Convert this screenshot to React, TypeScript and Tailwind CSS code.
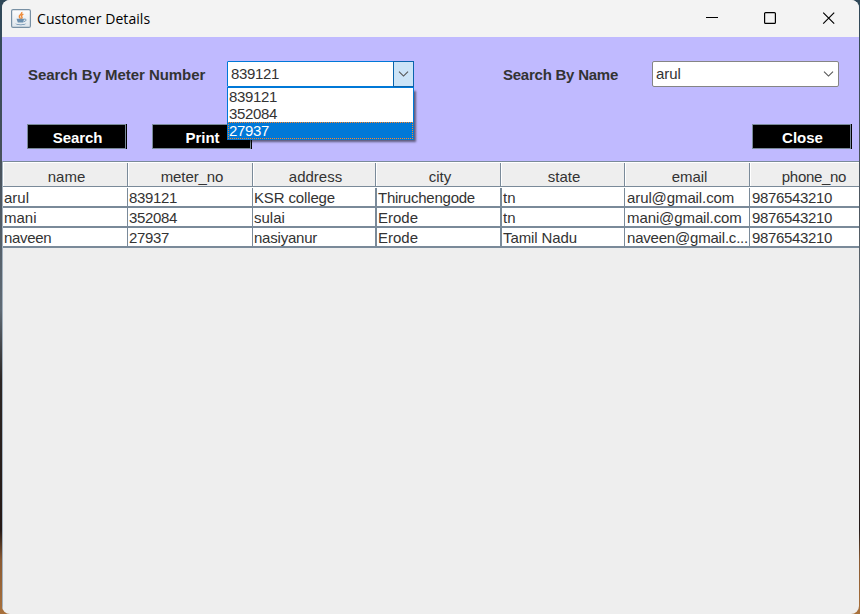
import React from 'react';

type Cell = { text: string; track: string };
type Column = { name: string; head: string; label: string; cell: string; rows: Cell[] };

const digits = 'tracking-[-0.34px]';

const columns: Column[] = [
  { name: 'name', head: 'w-[125px]', label: 'pl-[2px]', cell: 'w-[125px] border-r pl-px', rows: [{ text: 'arul', track: '' }, { text: 'mani', track: '' }, { text: 'naveen', track: 'tracking-[-0.3px]' }] },
  { name: 'meter_no', head: 'w-[125px]', label: 'pl-[3px] tracking-[-0.1px]', cell: 'w-[125px] border-r pl-px', rows: [{ text: '839121', track: digits }, { text: '352084', track: digits }, { text: '27937', track: digits }] },
  { name: 'address', head: 'w-[123px]', label: 'pl-[2px]', cell: 'w-[124px] border-r-2 pl-px', rows: [{ text: 'KSR college', track: 'tracking-[-0.14px]' }, { text: 'sulai', track: '' }, { text: 'nasiyanur', track: 'tracking-[-0.22px]' }] },
  { name: 'city', head: 'w-[125px]', label: 'pl-[3px]', cell: 'w-[125px] border-r-2 pl-px', rows: [{ text: 'Thiruchengode', track: 'tracking-[-0.24px]' }, { text: 'Erode', track: '' }, { text: 'Erode', track: '' }] },
  { name: 'state', head: 'w-[124px]', label: 'pl-[2px]', cell: 'w-[123px] border-r pl-px', rows: [{ text: 'tn', track: '' }, { text: 'tn', track: '' }, { text: 'Tamil Nadu', track: 'tracking-[-0.1px]' }] },
  { name: 'email', head: 'w-[125px]', label: 'pl-[4px] tracking-[-0.1px]', cell: 'w-[125px] border-r pl-[2px]', rows: [{ text: 'arul@gmail.com', track: 'tracking-[-0.1px]' }, { text: 'mani@gmail.com', track: 'tracking-[-0.1px]' }, { text: 'naveen@gmail.c...', track: 'tracking-[-0.2px]' }] },
  { name: 'phone_no', head: 'w-[125px]', label: 'pl-[3px] tracking-[-0.3px]', cell: 'w-[125px] pl-[2px]', rows: [{ text: '9876543210', track: digits }, { text: '9876543210', track: digits }, { text: '9876543210', track: digits }] },
];

function JavaIcon() {
  return (
    <svg className="block h-5 w-5" viewBox="0 0 20 20">
      <defs>
        <linearGradient id="plate" x1="0" y1="0" x2="0" y2="1">
          <stop offset="0" stopColor="#fdfdfd" />
          <stop offset="1" stopColor="#dfe6ec" />
        </linearGradient>
      </defs>
      <rect x="0.6" y="0.6" width="18.8" height="17.8" rx="1.5" fill="url(#plate)" stroke="#7890a4" strokeWidth="1.2" />
      <path d="M10.8 3c.8 2-3 2.9-2.5 4.9.2.8 1 1.2 1.3 1.9M12.4 5.2c-2 .9-2.5 1.8-1.5 2.8.5.6 0 1.2-.6 1.6" fill="none" stroke="#ee8b3a" strokeWidth="1.4" />
      <path d="M5.5 9.8h7.6l-.8 3.6H6.8zM4 14.3c2 1.5 9.5 1.5 11.4 0-1 2.6-10.2 2.6-11.4 0" fill="#6b8fae" />
      <path d="M13 10.2c2.8-.5 2.8 1.8-.2 2.4" fill="none" stroke="#6b8fae" />
    </svg>
  );
}

function Chevron() {
  return (
    <svg className="block h-[6px] w-[11px]" viewBox="0 0 11 6">
      <path d="M1 .7l4.5 4.4L10 .7" fill="none" stroke="#555" strokeWidth="1.1" />
    </svg>
  );
}

function Button({ label, track }: { label: string; track: string }) {
  return (
    <button className="block h-[25px] w-[100px] border-r border-black bg-black">
      <span className={`flex h-[25px] items-center justify-center border border-[#7a8a99] pt-px pl-[2px] text-[15px] leading-[17px] font-bold text-white ${track}`}>{label}</span>
    </button>
  );
}

export default function App() {
  return (
    <div className="h-[614px] w-[860px] overflow-hidden bg-[linear-gradient(180deg,#2f4858_0,#46505a_150px,#5f6a74_310px,#2b2523_380px,#241815_530px,#8a5a32_560px,#a9713c_614px)] pr-px pl-[2px] font-['Liberation_Sans',Arial,sans-serif] text-[15px] text-[#333]">
      <div className="flex h-[614px] flex-col overflow-hidden rounded-lg bg-[#eee]">
        <header className="flex h-[37px] shrink-0 items-center bg-[#f3f3f3] pr-[24px] pl-[9px] text-black">
          <JavaIcon />
          <span className="ml-[6px] grow font-['Open_Sans','Noto_Sans',sans-serif] text-[14px] leading-5 tracking-[0.06px] whitespace-nowrap">Customer Details</span>
          <svg className="block h-[13px] w-[129px]" viewBox="0 0 129 13" fill="none" stroke="#000">
            <path d="M0 5.5h12" />
            <rect x="58.6" y="0.6" width="10.8" height="10.8" rx="1" strokeWidth="1.2" />
            <path d="M117.2 .7l11 11M128.2 .7l-11 11" strokeWidth="1.2" />
          </svg>
        </header>

        <section className="h-[124px] shrink-0 bg-[#c0baff]">
          <div className="flex pt-[24px] pl-[26px]">
            <label className="w-[199px] pt-[5px] leading-[17px] font-bold tracking-[-0.05px] whitespace-nowrap">Search By Meter Number</label>
            <div className="relative h-[26px] w-[187px]">
              <div className="flex h-[26px] rounded-[1px] border border-[#0078d7] bg-white">
                <span className="grow pt-[3px] pl-[3px] leading-[17px] tracking-[-0.34px]">839121</span>
                <span className="-my-px -mr-px flex w-[21px] items-center justify-center border border-[#0a64ad] bg-[#cce4f7]"><Chevron /></span>
              </div>
              <ul className="absolute top-[26px] left-0 z-10 h-[53px] w-[187px] border border-[#0078d7] bg-white leading-[17px] tracking-[-0.34px] shadow-[3px_3px_2px_-1px_rgba(0,0,0,0.5)]">
                <li className="h-[17px] pl-px">839121</li>
                <li className="h-[17px] pl-px">352084</li>
                <li className="h-[17px] border border-dotted border-[#ff8728] bg-[#0078d7] leading-[15px] text-white">27937</li>
              </ul>
            </div>
            <label className="ml-[89px] w-[149px] pt-[5px] leading-[17px] font-bold tracking-[-0.24px] whitespace-nowrap">Search By Name</label>
            <div className="flex h-[26px] w-[187px] items-center rounded-[2px] border border-[#858585] bg-white pr-[4px] pl-[3px]">
              <span className="grow pb-[2px] leading-[17px] tracking-[-0.1px]">arul</span>
              <Chevron />
            </div>
          </div>
          <div className="mt-[37px] flex pl-[25px]">
            <Button label="Search" track="tracking-[-0.1px]" />
            <div className="ml-[25px]"><Button label="Print" track="" /></div>
            <div className="ml-[500px]"><Button label="Close" track="" /></div>
          </div>
        </section>

        <main className="grow overflow-hidden border-t border-l border-[#7a8a99] border-l-[#a3b1be]">
          <div className="flex h-[26px] w-max bg-white pt-px">
            {columns.map((c) => (
              <div key={c.name} className={`${c.head} h-[24px] border-r border-b border-[#7a8a99] bg-white pl-px`}>
                <div className={`${c.label} h-[23px] bg-[#eee] pt-[5px] text-center leading-[18px]`}>{c.name}</div>
              </div>
            ))}
          </div>
          {[0, 1, 2].map((r) => (
            <div key={r} className="flex h-[20px] w-max border-b-2 border-[#7a8a99] bg-white">
              {columns.map((c) => (
                <div key={c.name} className={`${c.cell} ${c.rows[r].track} h-[18px] overflow-hidden border-[#7a8a99] leading-[20px] whitespace-nowrap`}>{c.rows[r].text}</div>
              ))}
            </div>
          ))}
        </main>
      </div>
    </div>
  );
}
